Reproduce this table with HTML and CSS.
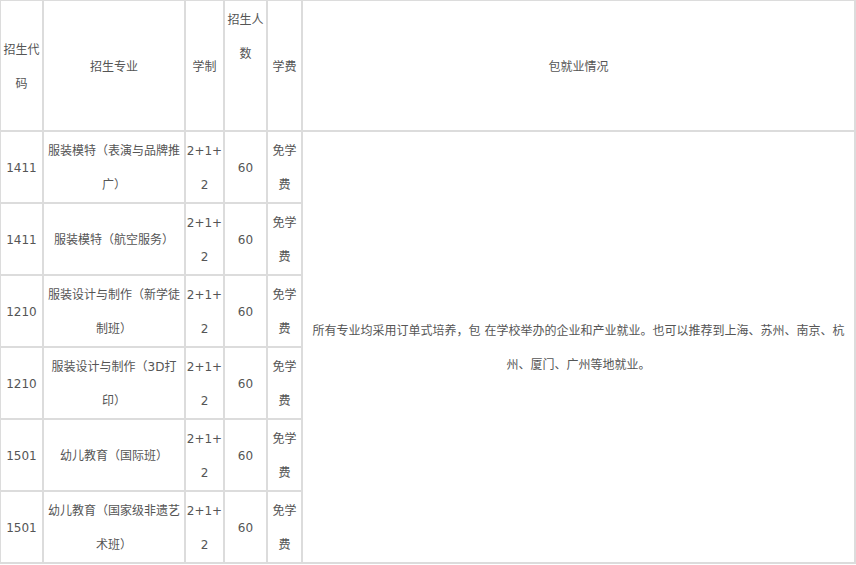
FILE: index.html
```html
<!DOCTYPE html>
<html lang="zh-CN">
<head>
<meta charset="utf-8">
<title>招生专业</title>
<link rel="stylesheet" href="styles.css">
</head>
<body>
<table class="plan">
  <colgroup>
    <col class="c-code">
    <col class="c-major">
    <col class="c-years">
    <col class="c-count">
    <col class="c-fee">
    <col class="c-job">
  </colgroup>
  <thead>
    <tr class="head-row">
      <th>招生代码</th>
      <th>招生专业</th>
      <th class="narrow">学制</th>
      <th class="top">招生人数</th>
      <th>学费</th>
      <th>包就业情况</th>
    </tr>
  </thead>
  <tbody>
    <tr>
      <td>1411</td>
      <td>服装模特（表演与品牌推广）</td>
      <td class="narrow">2+1+2</td>
      <td>60</td>
      <td class="top">免学费</td>
      <td class="job" rowspan="6">所有专业均采用订单式培养，包 在学校举办的企业和产业就业。也可以推荐到上海、苏州、南京、杭州、厦门、广州等地就业。</td>
    </tr>
    <tr>
      <td>1411</td>
      <td>服装模特（航空服务）</td>
      <td class="narrow">2+1+2</td>
      <td>60</td>
      <td class="top">免学费</td>
    </tr>
    <tr>
      <td>1210</td>
      <td>服装设计与制作（新学徒制班）</td>
      <td class="narrow">2+1+2</td>
      <td>60</td>
      <td class="top">免学费</td>
    </tr>
    <tr>
      <td>1210</td>
      <td>服装设计与制作（3D打印）</td>
      <td class="narrow">2+1+2</td>
      <td>60</td>
      <td class="top">免学费</td>
    </tr>
    <tr>
      <td>1501</td>
      <td>幼儿教育（国际班）</td>
      <td class="narrow">2+1+2</td>
      <td>60</td>
      <td class="top">免学费</td>
    </tr>
    <tr>
      <td>1501</td>
      <td>幼儿教育（国家级非遗艺术班）</td>
      <td class="narrow">2+1+2</td>
      <td>60</td>
      <td class="top">免学费</td>
    </tr>
  </tbody>
</table>
</body>
</html>
```

FILE: styles.css
```css
html, body {
  margin: 0;
  padding: 0;
  background: #fff;
}

.plan {
  border-collapse: collapse;
  table-layout: fixed;
  width: 857px;
  margin: -1px 0 0 -1px;
  font-family: "DejaVu Sans", "Noto Sans CJK SC", sans-serif;
  font-size: 12px;
  color: #555;
}

.c-code { width: 43px; }
.c-major { width: 142px; }
.c-years { width: 39px; }
.c-count { width: 43px; }
.c-fee { width: 35px; }

.plan th,
.plan td {
  border: 2px solid #dcdcdc;
  padding: 2px 0 0;
  font-weight: normal;
  text-align: center;
  vertical-align: middle;
  line-height: 34px;
  overflow: hidden;
}

.head-row {
  height: 131px;
}

.plan tbody tr {
  height: 72px;
}

.plan .top {
  vertical-align: top;
}

.plan .narrow {
  word-break: break-all;
}

.plan .job {
  vertical-align: middle;
}
```
